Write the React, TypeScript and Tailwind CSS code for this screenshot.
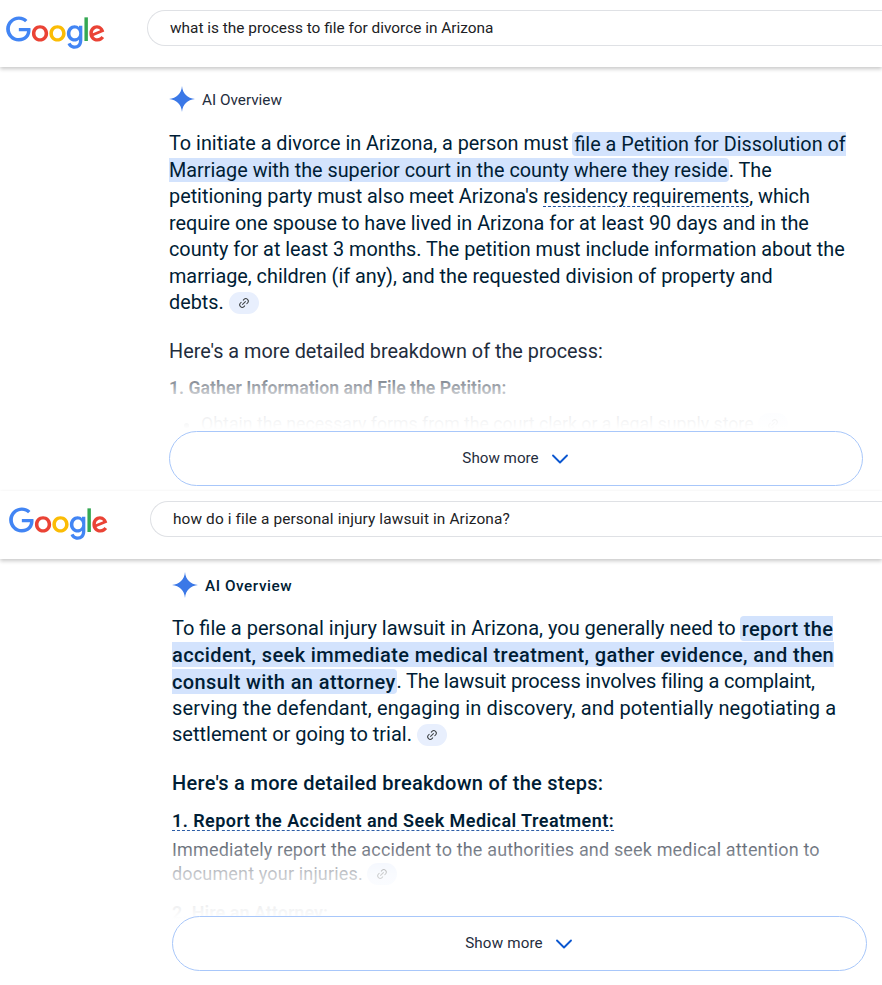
import { ChevronDown, Link2 } from "lucide-react";
import type { ReactNode } from "react";

function GoogleLogo() {
  return (
    <svg viewBox="0 0 272 92" className="w-[99px] h-[34px] shrink-0 mt-[6px]">
      <path fill="#EA4335" d="M115.75 47.18c0 12.77-9.99 22.18-22.25 22.18s-22.25-9.41-22.25-22.18C71.25 34.32 81.24 25 93.5 25s22.25 9.32 22.25 22.18zm-9.74 0c0-7.98-5.79-13.44-12.51-13.44S80.99 39.2 80.99 47.18c0 7.9 5.79 13.44 12.51 13.44s12.51-5.55 12.51-13.44z" />
      <path fill="#FBBC05" d="M163.75 47.18c0 12.77-9.99 22.18-22.25 22.18s-22.25-9.41-22.25-22.18c0-12.85 9.99-22.18 22.25-22.18s22.25 9.32 22.25 22.18zm-9.74 0c0-7.98-5.79-13.44-12.51-13.44s-12.51 5.46-12.51 13.44c0 7.9 5.79 13.44 12.51 13.44s12.51-5.55 12.51-13.44z" />
      <path fill="#4285F4" d="M209.75 26.34v39.82c0 16.38-9.66 23.07-21.08 23.07-10.75 0-17.22-7.19-19.66-13.07l8.48-3.53c1.51 3.61 5.21 7.87 11.17 7.87 7.31 0 11.84-4.51 11.84-13v-3.19h-.34c-2.18 2.69-6.38 5.04-11.68 5.04-11.09 0-21.25-9.66-21.25-22.09 0-12.52 10.16-22.26 21.25-22.26 5.29 0 9.49 2.35 11.68 4.96h.34v-3.61h9.25zm-8.56 20.92c0-7.81-5.21-13.52-11.84-13.52-6.72 0-12.35 5.71-12.35 13.52 0 7.73 5.63 13.36 12.35 13.36 6.63 0 11.84-5.63 11.84-13.36z" />
      <path fill="#34A853" d="M225 3v65h-9.5V3h9.5z" />
      <path fill="#EA4335" d="M262.02 54.48l7.56 5.04c-2.44 3.61-8.32 9.83-18.48 9.83-12.6 0-22.01-9.74-22.01-22.18 0-13.19 9.49-22.18 20.92-22.18 11.51 0 17.14 9.16 18.98 14.11l1.01 2.52-29.65 12.28c2.27 4.45 5.8 6.72 10.75 6.72 4.96 0 8.4-2.44 10.92-6.14zm-23.27-7.98l19.82-8.23c-1.09-2.77-4.37-4.7-8.23-4.7-4.95 0-11.84 4.37-11.59 12.93z" />
      <path fill="#4285F4" d="M35.29 41.41V32H67c.31 1.64.47 3.58.47 5.68 0 7.06-1.93 15.79-8.15 22.01-6.05 6.3-13.78 9.66-24.02 9.66C16.32 69.35.36 53.89.36 34.91.36 15.93 16.32.47 35.3.47c10.5 0 17.98 4.12 23.6 9.49l-6.64 6.64c-4.03-3.78-9.49-6.72-16.97-6.72-13.86 0-24.7 11.17-24.7 25.03 0 13.86 10.84 25.03 24.7 25.03 8.99 0 14.11-3.61 17.39-6.89 2.66-2.66 4.41-6.46 5.1-11.65l-22.49.01z" />
    </svg>
  );
}

function Spark() {
  return (
    <svg viewBox="0 0 24 24" className="w-[26px] h-[26px] shrink-0">
      <path fill="#3b78e7" d="M12 0C12.6 7 17 11.4 24 12 17 12.6 12.6 17 12 24 11.4 17 7 12.6 0 12 7 11.4 11.4 7 12 0z" />
    </svg>
  );
}

function Chip() {
  return (
    <span className="inline-flex items-center justify-center w-[30px] h-[22px] rounded-full bg-[#e8effd] align-[0px]">
      <Link2 className="w-[12px] h-[12px] -rotate-45 text-[#3c4043]" strokeWidth={2} />
    </span>
  );
}

function Mark({ children }: { children: ReactNode }) {
  return (
    <mark className="bg-[#d3e3fd] text-inherit py-[0.5px] pl-[2px] pr-[1px] -ml-[1px] rounded-[4px]">
      {children}
    </mark>
  );
}

function SearchHeader({ query, className, queryClass }: { query: string; className: string; queryClass: string }) {
  return (
    <header className={`flex items-start pt-[10px] bg-white shadow-[0_2px_4px_rgba(0,0,0,0.22)] relative z-10 ${className}`}>
      <GoogleLogo />
      <div className={`ml-[42px] flex-1 h-[36px] flex items-center pl-[22px] pt-[1px] border border-r-0 border-[#dfe1e5] rounded-l-full text-[#202124] ${queryClass}`}>
        {query}
      </div>
    </header>
  );
}

function ShowMore({ className, labelClass }: { className: string; labelClass: string }) {
  return (
    <button className={`absolute left-0 right-0 h-[55px] flex items-center justify-center gap-[7px] pl-[4px] bg-white border border-[#a8c7fa] rounded-[28px] text-[#1f2d3d] ${labelClass} ${className}`}>
      Show more
      <ChevronDown className="w-[28px] h-[28px] text-[#0b57d0]" strokeWidth={1.6} />
    </button>
  );
}

export default function App() {
  return (
    <div className="w-[882px] h-[985px] overflow-hidden bg-white text-[#0f1f2e] font-['Roboto',sans-serif]">
      <section className="h-[491px] flex flex-col">
        <SearchHeader
          query="what is the process to file for divorce in Arizona"
          className="h-[67px] pl-[6px]"
          queryClass="text-[15.4px]"
        />
        <div className="ml-[169px] mr-[19px] relative flex-1">
          <div className="flex items-center gap-[7px] pt-[19px] text-[15.3px] text-[#1f2d3d]">
            <Spark />
            <span className="pt-[2px]">AI Overview</span>
          </div>
          <p className="mt-[19px] text-[19.82px] leading-[26.5px] text-[#001d35]">
            To initiate a divorce in Arizona, a person must{" "}
            <Mark>file a Petition for Dissolution of Marriage with the superior court in the county where they reside</Mark>
            . The petitioning party must also meet Arizona's{" "}
            <span className="underline decoration-dashed decoration-1 decoration-[#1a4fa0] underline-offset-[3px]">residency requirements</span>
            , which require one spouse to have lived in Arizona for at least 90 days and in the county for at least 3 months. The petition must include information about the marriage, children (if any), and the requested division of property and{" "}
            <span className="whitespace-nowrap">debts. <Chip /></span>
          </p>
          <p className="mt-[22px] text-[19.82px] leading-[26.5px] text-[#1f2d3d]">Here's a more detailed breakdown of the process:</p>
          <p className="mt-[10px] text-[17.7px] leading-[26px] font-semibold text-[#1f2d3d]">1. Gather Information and File the Petition:</p>
          <ul className="mt-[10px] ml-[32px] list-disc text-[17.7px] leading-[26px] text-[#1f2d3d]">
            <li>Obtain the necessary forms from the court clerk or a legal supply store <Chip /></li>
          </ul>
          <div className="absolute left-0 right-0 top-[295px] h-[75px] bg-gradient-to-b from-transparent via-white/80 via-45% to-white to-90%" />
          <ShowMore className="bottom-[5px]" labelClass="text-[15.2px]" />
        </div>
      </section>
      <section className="flex flex-col">
        <SearchHeader
          query="how do i file a personal injury lawsuit in Arizona?"
          className="h-[68px] pl-[9px]"
          queryClass="text-[15.4px] tracking-[0.12px]"
        />
        <div className="ml-[172px] mr-[15px] relative h-[412px]">
          <div className="flex items-center gap-[7px] pt-[13px] text-[15.3px] font-medium tracking-[0.55px] text-[#001d35]">
            <Spark />
            <span className="pt-[2px]">AI Overview</span>
          </div>
          <p className="mt-[17px] text-[20px] leading-[26.5px] text-[#001d35]">
            To file a personal injury lawsuit in Arizona, you generally need to{" "}
            <Mark>
              <span className="font-medium tracking-[0.38px]">report the accident, seek immediate medical treatment, gather evidence, and then consult with an attorney</span>
            </Mark>
            <span className="tracking-[-0.18px]">. The lawsuit process involves filing a complaint,</span>{" "}
            <span className="tracking-[0.14px]">serving the defendant, engaging in discovery, and potentially negotiating a</span>{" "}
            settlement or going to trial. <Chip />
          </p>
          <p className="mt-[22px] text-[20px] leading-[26.5px] font-medium tracking-[0.28px] text-[#001d35]">Here's a more detailed breakdown of the steps:</p>
          <p className="mt-[12px] text-[18px] leading-[26px] font-semibold tracking-[0.44px] text-[#001d35]">
            <span className="underline decoration-dashed decoration-1 decoration-[#1a4fa0] underline-offset-[3px]">1. Report the Accident and Seek Medical Treatment:</span>
          </p>
          <p className="mt-[4px] text-[18px] leading-[24px] tracking-[0.16px] text-[#1f2d3d]">
            Immediately report the accident to the authorities and seek medical attention to document your injuries. <Chip />
          </p>
          <p className="mt-[14px] text-[18px] leading-[26px] font-semibold text-[#1f2d3d]">2. Hire an Attorney:</p>
          <div className="absolute left-0 right-0 top-[266px] h-[125px] bg-gradient-to-b from-transparent via-white/75 via-40% to-white to-75%" />
          <ShowMore className="bottom-0" labelClass="text-[15.2px] tracking-[0.15px]" />
        </div>
      </section>
    </div>
  );
}
